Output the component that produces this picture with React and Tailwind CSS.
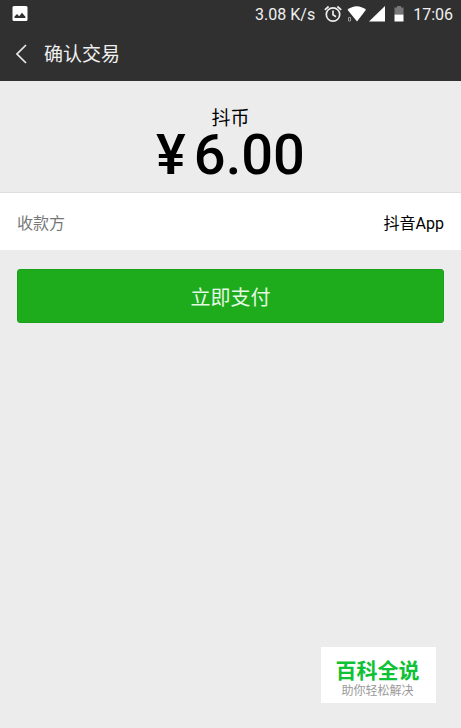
function StatusBar() {
  return (
    <div className="flex h-7 items-center justify-between pr-2 pl-3 text-base text-[#f0f0f0]">
      <svg className="size-4" viewBox="0 0 16 16" aria-hidden="true">
        <rect x="0.5" y="0" width="15" height="15" rx="1.5" fill="#fff" />
        <path d="M2.500 12V10.500L5 8l2.200 2.200L10 6.800l3.400 4V12Z" fill="#303030" />
      </svg>
      <div className="flex items-center">
        <span className="pt-px">3.08 K/s</span>
        <svg className="ml-2 size-5" viewBox="0 0 20 20" fill="none" stroke="#eee" strokeWidth="1.7" aria-hidden="true">
          <circle cx="10" cy="10.5" r="6.7" />
          <path d="M10 6.600v4.200l3 1.900M1.800 5.800l3.800-3.300M18.200 5.800l-3.800-3.300" />
        </svg>
        <svg className="ml-1 h-4 w-5" viewBox="0 0 20 16" fill="#fff" aria-hidden="true">
          <path d="M0.500 3.800C6-1 13.500-1 19 3.800L10 15.500Z" />
          <path d="M1.500 11.500h2v3.500h-2Z" stroke="#999" fill="none" />
        </svg>
        <svg className="ml-0.5 size-4" viewBox="0 0 16 16" aria-hidden="true">
          <path d="M16 0v15.500H0Z" fill="#fff" />
        </svg>
        <svg className="ml-2 h-4 w-3" viewBox="0 0 12 16" aria-hidden="true">
          <path d="M1.500 1.500h2.500V0h4v1.500h2.500V8.500h-9Z" fill="#777" />
          <path d="M1.500 8.500h9v7h-9Z" fill="#fff" />
        </svg>
        <time className="ml-2 pt-px">17:06</time>
      </div>
    </div>
  );
}

export default function App() {
  return (
    <div className="flex min-h-screen flex-col bg-[#ececec] font-[Roboto,'Noto_Sans_CJK_SC',sans-serif] text-black">
      <header className="bg-[#303030] pb-px">
        <StatusBar />
        <div className="flex h-[52px] items-center gap-4 pl-4">
          <button type="button" aria-label="返回" className="flex">
            <svg className="h-5 w-3" viewBox="0 0 12 20" fill="none" stroke="#e8e8e8" strokeWidth="1.7" aria-hidden="true">
              <path d="M10 1 1 10l9 9" />
            </svg>
          </button>
          <h1 className="pt-0.5 text-[19px] leading-7 text-[#f0f0f0]">确认交易</h1>
        </div>
      </header>
      <main className="grow">
        <section className="flex h-28 flex-col items-center border-b border-[#dedede] pt-6">
          <h2 className="text-[19px] leading-7">抖币</h2>
          <p className="flex gap-2 text-[56px] leading-[44px] font-medium">
            <span>¥</span>
            <span>6.00</span>
          </p>
        </section>
        <dl className="flex h-[57px] items-center justify-between bg-white px-[17px] pt-1 text-base">
          <dt className="text-[#777]">收款方</dt>
          <dd>抖音App</dd>
        </dl>
        <div className="px-[17px] pt-[19px]">
          <button type="button" className="h-[54px] w-full rounded-[3px] border border-[#1aa01c] bg-[#1eac1c] pt-1 text-xl text-[#e4f8e4]">
            立即支付
          </button>
        </div>
      </main>
      <aside className="mr-[25px] mb-[25px] flex h-14 w-[115px] flex-col items-center self-end bg-white pt-3 pr-0.5">
        <strong className="text-[21px] leading-6 font-bold text-[#0fc135]">百科全说</strong>
        <span className="text-xs leading-4 text-[#999]">助你轻松解决</span>
      </aside>
    </div>
  );
}
